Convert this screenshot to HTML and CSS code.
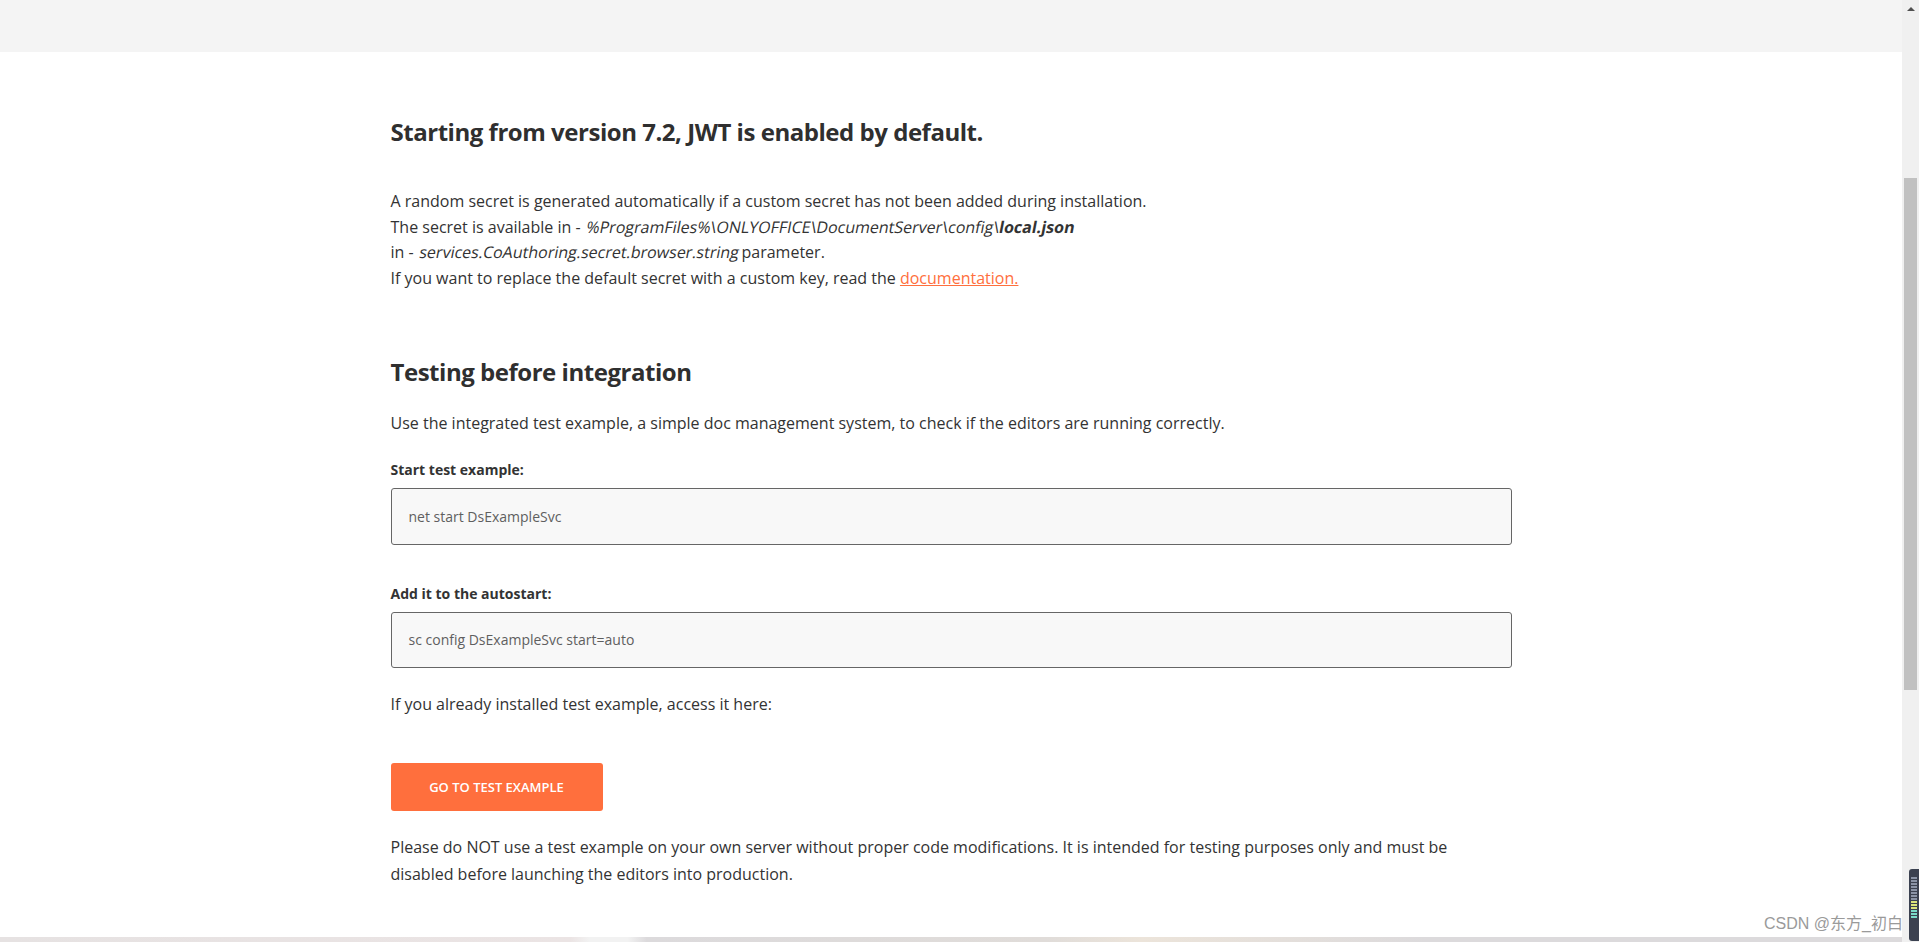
FILE: index.html
```html
<!DOCTYPE html>
<html lang="en">
<head>
<meta charset="utf-8">
<title>ONLYOFFICE Document Server</title>
<link rel="stylesheet" href="styles.css">
</head>
<body>
<div class="viewport">
  <div class="page">
    <div class="topbar"></div>
    <main class="content">
      <h1 class="title">Starting from version 7.2, JWT is enabled by default.</h1>
      <p class="text first">
        A random secret is generated automatically if a custom secret has not been added during installation.<br>
        The secret is available in - <span class="oblique">%ProgramFiles%\ONLYOFFICE\DocumentServer\config\<b>local.json</b></span><br>
        in - <span class="oblique">services.CoAuthoring.secret.browser.string</span> parameter.<br>
        If you want to replace the default secret with a custom key, read the <a class="link" href="#">documentation.</a>
      </p>

      <h2 class="title second">Testing before integration</h2>
      <p class="text intro">Use the integrated test example, a simple doc management system, to check if the editors are running correctly.</p>

      <div class="label">Start test example:</div>
      <div class="code">net start DsExampleSvc</div>

      <div class="label label-2">Add it to the autostart:</div>
      <div class="code">sc config DsExampleSvc start=auto</div>

      <p class="text access">If you already installed test example, access it here:</p>

      <a class="button" href="#">GO TO TEST EXAMPLE</a>

      <p class="text warning">Please do NOT use a test example on your own server without proper code modifications. It is intended for testing purposes only and must be disabled before launching the editors into production.</p>
    </main>
    <div class="hscroll"></div>
  </div>
  <div class="vscroll">
    <div class="arrow-up"></div>
    <div class="thumb"></div>
    <div class="widget">
      <span></span><span></span><span></span><span></span><span></span><span></span><span></span><span></span><span class="y"></span><span class="y"></span><span class="y"></span><span class="g"></span><span class="g"></span><span class="g"></span>
    </div>
  </div>
  <div class="watermark">CSDN @东方_初白</div>
</div>
</body>
</html>
```
FILE: styles.css
```css
html, body {
  margin: 0;
  padding: 0;
  height: 100%;
  overflow: hidden;
  background: #fff;
}

body {
  font-family: "Open Sans", "Noto Sans", sans-serif;
  color: #333;
}

.viewport {
  display: flex;
  height: 942px;
  position: relative;
}

.page {
  flex: 1;
  display: flex;
  flex-direction: column;
  min-width: 0;
}

.topbar {
  height: 52px;
  background: #f4f4f4;
  flex: none;
}

.content {
  width: 1121px;
  margin: 0 auto;
  flex: 1;
}

.title {
  font-size: 24px;
  line-height: 32px;
  font-weight: 700;
  letter-spacing: -0.47px;
  margin: 64px 0 0;
  color: #2f2f2f;
}

.title.second {
  margin-top: 64px;
}

.text {
  font-size: 16px;
  line-height: 25.7px;
  margin: 0;
  color: #333;
}

.text.first {
  margin-top: 41px;
}

.text.intro {
  margin-top: 23px;
}

.oblique {
  display: inline-block;
  transform: skewX(-11deg);
  transform-origin: 0 80%;
}

.text b {
  font-weight: 700;
}

.link {
  color: #ff6f3d;
  text-decoration: underline;
}

.label {
  font-size: 14px;
  line-height: 22px;
  font-weight: 700;
  margin-top: 22px;
  color: #333;
}

.label.label-2 {
  margin-top: 38px;
}

.code {
  margin-top: 7px;
  height: 55px;
  box-sizing: content-box;
  border: 1px solid #666;
  border-radius: 3px;
  background: #f8f8f8;
  display: flex;
  align-items: center;
  padding: 0 17px;
  font-size: 14px;
  color: #5f5f5f;
}

.code + .label.label-2 + .code {
  height: 54px;
}

.text.access {
  margin-top: 24px;
}

.button {
  display: inline-flex;
  align-items: center;
  justify-content: center;
  margin-top: 46px;
  width: 212px;
  height: 48px;
  background: #ff6f3d;
  border-radius: 3px;
  color: #fff;
  font-size: 13px;
  font-weight: 600;
  text-decoration: none;
}

.text.warning {
  margin-top: 23px;
  line-height: 27px;
}

.hscroll {
  height: 5px;
  flex: none;
  background: linear-gradient(90deg, #e6e2e2 0%, #ebe4e4 30%, #f2f2f2 31%, #f2f2f2 33%, #dcdadc 34%, #e0dcd9 55%, #ece4da 60%, #dcdadc 75%, #dcdadc 100%);
}

.vscroll {
  width: 17px;
  flex: none;
  background: #f0f0f0;
  display: flex;
  flex-direction: column;
  align-items: center;
  position: relative;
}

.arrow-up {
  margin-top: 7px;
  width: 0;
  height: 0;
  border-left: 4px solid transparent;
  border-right: 4px solid transparent;
  border-bottom: 4px solid #505050;
}

.thumb {
  margin-top: 167px;
  width: 13px;
  height: 512px;
  background: #c1c1c1;
}

.widget {
  position: absolute;
  right: 0;
  top: 869px;
  width: 10px;
  height: 72px;
  background: #3b4150;
  border-radius: 3px 0 0 3px;
  display: flex;
  flex-direction: column;
  align-items: center;
  gap: 1px;
  padding-top: 8px;
  box-sizing: border-box;
}

.widget span {
  display: block;
  width: 6px;
  height: 2px;
  background: #8a93a6;
}

.widget span.y {
  background: #d9e27a;
}

.widget span.g {
  background: #7ad9c8;
}

.watermark {
  position: absolute;
  right: 16px;
  top: 914px;
  font-family: "Liberation Sans", "Noto Sans CJK SC", sans-serif;
  font-size: 16px;
  color: #9a9a9a;
  line-height: 20px;
}
```
